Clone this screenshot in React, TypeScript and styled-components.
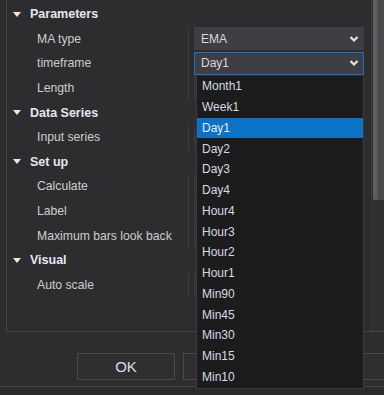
import React from "react";
import styled, { createGlobalStyle } from "styled-components";

const Global = createGlobalStyle`
  html, body { margin: 0; padding: 0; background: #2d2d30; }
  body { font-family: "Liberation Sans", Arial, sans-serif; }
`;

const Window = styled.div`
  position: relative;
  width: 384px;
  height: 395px;
  overflow: hidden;
  background: #2d2d30;
  display: flex;
  flex-direction: column;
`;

const Panel = styled.div`
  margin-left: 6px;
  width: 392px;
  height: 331px;
  flex: none;
  border-left: 1px solid #464646;
  border-bottom: 1px solid #464646;
  display: flex;
`;

const Grid = styled.div`
  width: 364px;
  padding-top: 2px;
  display: flex;
  flex-direction: column;
`;

const CategoryRow = styled.div`
  height: 24.6px;
  display: flex;
  align-items: center;
  padding-left: 6px;
  gap: 9px;
  color: #e3e8ef;
  font-weight: bold;
  font-size: 12.5px;
`;

const Triangle = styled.span`
  width: 0;
  height: 0;
  border-left: 4.5px solid transparent;
  border-right: 4.5px solid transparent;
  border-top: 5px solid #e8e8e8;
`;

const PropRow = styled.div`
  height: 24.6px;
  display: flex;
  align-items: stretch;
`;

const NameCell = styled.div`
  width: 181px;
  padding-left: 30px;
  box-sizing: border-box;
  display: flex;
  align-items: center;
  color: #cdcdcd;
  font-size: 12.2px;
`;

const ValueCell = styled.div`
  flex: 1;
  border-left: 1px solid #3d3d3f;
  display: flex;
  align-items: center;
  padding: 0 7px 0 5px;
`;

const ValueBox = styled.div<{ $focused?: boolean; $plain?: boolean }>`
  flex: 1;
  height: 23px;
  box-sizing: border-box;
  background: ${(p) => (p.$plain ? "#323236" : "#3e3e44")};
  border: 1px solid ${(p) => (p.$focused ? "#1b72c2" : p.$plain ? "#3a3a3e" : "#3e3e44")};
  display: flex;
  align-items: center;
  justify-content: space-between;
  padding: 0 4px 0 6px;
  color: #d9d9d9;
  font-size: 12px;
`;

const ScrollTrack = styled.div`
  width: 14px;
  background: #303033;
  border-left: 1px solid #3a3a3c;
  display: flex;
  flex-direction: column;
`;

const Thumb = styled.div`
  height: 200px;
  margin-left: 1px;
  background: linear-gradient(to right, #5f5f5f 0, #5f5f5f 4px, #4a4a4c 5px, #4a4a4c 100%);
  border-radius: 0 0 2px 2px;
`;

const ButtonBar = styled.div`
  display: flex;
  gap: 8px;
  padding-left: 77px;
  margin-top: 21px;
`;

const Button = styled.button`
  flex: none;
  width: 98px;
  height: 27px;
  box-sizing: border-box;
  background: #2f2f32;
  border: 1px solid #4a4a4c;
  color: #d6dde8;
  font-family: "Liberation Sans", Arial, sans-serif;
  font-size: 15px;
  padding: 0;
`;

const Footer = styled.div`
  margin-top: 6px;
  flex: 1;
  border-top: 1px solid #444446;
  background: #2b2b2e;
`;

const DropList = styled.ul`
  position: absolute;
  left: 196px;
  top: 76px;
  width: 168px;
  margin: 0;
  padding: 0 0 1px 0;
  list-style: none;
  background: #1c1c1d;
  border: 1px solid #3a3a3c;
  border-top: none;
  box-sizing: border-box;
`;

const Item = styled.li<{ $active?: boolean }>`
  height: 20.75px;
  display: flex;
  align-items: center;
  padding-left: 5px;
  font-size: 12px;
  color: ${(p) => (p.$active ? "#e8eef6" : "#d4dbe6")};
  background: ${(p) => (p.$active ? "#0b72c6" : "transparent")};
`;

const Chevron = () => (
  <svg width="10" height="8" viewBox="0 0 10 8">
    <path d="M1.5 2 L5 5.5 L8.5 2" fill="none" stroke="#e4e4e4" strokeWidth="2.2" />
  </svg>
);

type Row =
  | { kind: "cat"; label: string }
  | { kind: "prop"; label: string; value?: string; select?: boolean; focused?: boolean };

const rows: Row[] = [
  { kind: "cat", label: "Parameters" },
  { kind: "prop", label: "MA type", value: "EMA", select: true },
  { kind: "prop", label: "timeframe", value: "Day1", select: true, focused: true },
  { kind: "prop", label: "Length" },
  { kind: "cat", label: "Data Series" },
  { kind: "prop", label: "Input series" },
  { kind: "cat", label: "Set up" },
  { kind: "prop", label: "Calculate" },
  { kind: "prop", label: "Label" },
  { kind: "prop", label: "Maximum bars look back" },
  { kind: "cat", label: "Visual" },
  { kind: "prop", label: "Auto scale" },
];

const options = [
  "Month1", "Week1", "Day1", "Day2", "Day3", "Day4", "Hour4", "Hour3",
  "Hour2", "Hour1", "Min90", "Min45", "Min30", "Min15", "Min10",
];

export default function App() {
  return (
    <Window>
      <Global />
      <Panel>
        <Grid>
          {rows.map((r, i) =>
            r.kind === "cat" ? (
              <CategoryRow key={i}>
                <Triangle />
                {r.label}
              </CategoryRow>
            ) : (
              <PropRow key={i}>
                <NameCell>{r.label}</NameCell>
                <ValueCell>
                  <ValueBox $focused={r.focused} $plain={!r.select}>
                    {r.value && <span>{r.value}</span>}
                    {r.select && <Chevron />}
                  </ValueBox>
                </ValueCell>
              </PropRow>
            )
          )}
        </Grid>
        <ScrollTrack>
          <Thumb />
        </ScrollTrack>
      </Panel>
      <ButtonBar>
        <Button>OK</Button>
        <Button aria-label="Cancel" />
        <Button aria-label="Apply" />
      </ButtonBar>
      <Footer />
      <DropList>
        {options.map((o) => (
          <Item key={o} $active={o === "Day1"}>
            {o}
          </Item>
        ))}
      </DropList>
    </Window>
  );
}
